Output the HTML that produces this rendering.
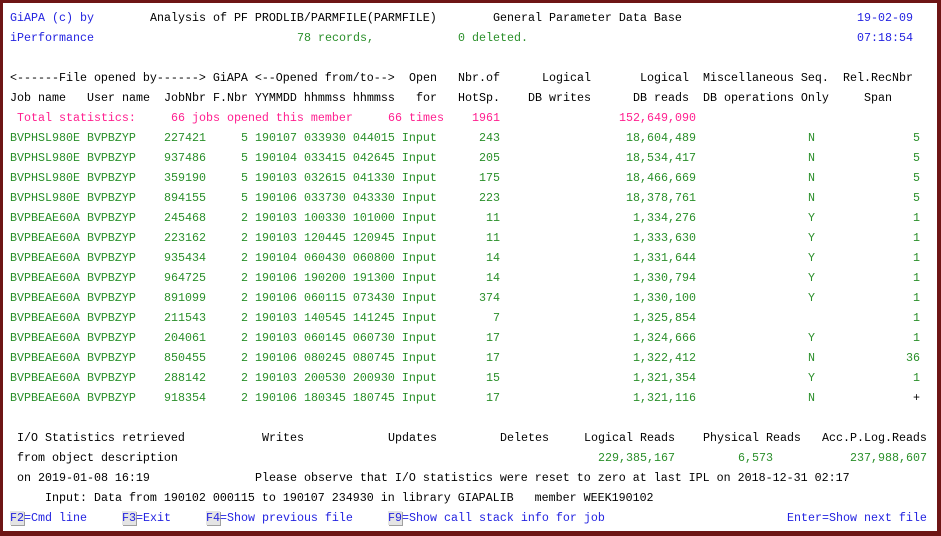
<!DOCTYPE html>
<html><head><meta charset="utf-8">
<style>
html,body{margin:0;padding:0}
body{width:941px;height:536px;background:#6e1515;position:relative;overflow:hidden}
#s{position:absolute;left:3px;top:3px;width:934px;height:528px;background:#fff}
#w{position:absolute;left:0;top:0;width:941px;height:536px;font-family:"Liberation Mono",monospace;font-size:11.67px;color:#000}
.l{position:absolute;left:0;width:941px;height:20px;line-height:20px}
.l span{position:absolute;white-space:pre}
.b{color:#2323e0}.g{color:#2a8f2a}.p{color:#ff1f8f}
.k{background:#e4e4e4;box-shadow:1px 1px 0 #a0a0a0}
</style></head><body>
<div id="s"></div>
<div id="w">
<div class="l" style="top:8px"><span class="b" style="left:10px">GiAPA (c) by</span><span style="left:150px">Analysis of PF PRODLIB/PARMFILE(PARMFILE)</span><span style="left:493px">General Parameter Data Base</span><span class="b" style="left:857px">19-02-09</span></div>
<div class="l" style="top:28px"><span class="b" style="left:10px">iPerformance</span><span class="g" style="left:297px">78 records,</span><span class="g" style="left:458px">0 deleted.</span><span class="b" style="left:857px">07:18:54</span></div>
<div class="l" style="top:68px"><span style="left:10px">&lt;------File opened by------&gt; GiAPA &lt;--Opened from/to--&gt;</span><span style="left:409px">Open</span><span style="left:458px">Nbr.of</span><span style="left:542px">Logical</span><span style="left:640px">Logical</span><span style="left:703px">Miscellaneous Seq.</span><span style="left:843px">Rel.RecNbr</span></div>
<div class="l" style="top:88px"><span style="left:10px">Job name</span><span style="left:87px">User name</span><span style="left:164px">JobNbr F.Nbr YYMMDD hhmmss hhmmss</span><span style="left:416px">for</span><span style="left:458px">HotSp.</span><span style="left:528px">DB writes</span><span style="left:633px">DB reads</span><span style="left:703px">DB operations Only</span><span style="left:864px">Span</span></div>
<div class="l p" style="top:108px"><span style="left:17px">Total statistics:</span><span style="left:171px">66 jobs opened this member</span><span style="left:388px">66 times</span><span style="right:441px">1961</span><span style="right:245px">152,649,090</span></div>

<div class="l g" style="top:128px"><span style="left:10px">BVPHSL980E BVPBZYP</span><span style="left:164px">227421</span><span style="left:241px">5 190107 033930 044015 Input</span><span style="right:441px">243</span><span style="right:245px">18,604,489</span><span style="left:808px">N</span><span style="right:21px">5</span></div>
<div class="l g" style="top:148px"><span style="left:10px">BVPHSL980E BVPBZYP</span><span style="left:164px">937486</span><span style="left:241px">5 190104 033415 042645 Input</span><span style="right:441px">205</span><span style="right:245px">18,534,417</span><span style="left:808px">N</span><span style="right:21px">5</span></div>
<div class="l g" style="top:168px"><span style="left:10px">BVPHSL980E BVPBZYP</span><span style="left:164px">359190</span><span style="left:241px">5 190103 032615 041330 Input</span><span style="right:441px">175</span><span style="right:245px">18,466,669</span><span style="left:808px">N</span><span style="right:21px">5</span></div>
<div class="l g" style="top:188px"><span style="left:10px">BVPHSL980E BVPBZYP</span><span style="left:164px">894155</span><span style="left:241px">5 190106 033730 043330 Input</span><span style="right:441px">223</span><span style="right:245px">18,378,761</span><span style="left:808px">N</span><span style="right:21px">5</span></div>
<div class="l g" style="top:208px"><span style="left:10px">BVPBEAE60A BVPBZYP</span><span style="left:164px">245468</span><span style="left:241px">2 190103 100330 101000 Input</span><span style="right:441px">11</span><span style="right:245px">1,334,276</span><span style="left:808px">Y</span><span style="right:21px">1</span></div>
<div class="l g" style="top:228px"><span style="left:10px">BVPBEAE60A BVPBZYP</span><span style="left:164px">223162</span><span style="left:241px">2 190103 120445 120945 Input</span><span style="right:441px">11</span><span style="right:245px">1,333,630</span><span style="left:808px">Y</span><span style="right:21px">1</span></div>
<div class="l g" style="top:248px"><span style="left:10px">BVPBEAE60A BVPBZYP</span><span style="left:164px">935434</span><span style="left:241px">2 190104 060430 060800 Input</span><span style="right:441px">14</span><span style="right:245px">1,331,644</span><span style="left:808px">Y</span><span style="right:21px">1</span></div>
<div class="l g" style="top:268px"><span style="left:10px">BVPBEAE60A BVPBZYP</span><span style="left:164px">964725</span><span style="left:241px">2 190106 190200 191300 Input</span><span style="right:441px">14</span><span style="right:245px">1,330,794</span><span style="left:808px">Y</span><span style="right:21px">1</span></div>
<div class="l g" style="top:288px"><span style="left:10px">BVPBEAE60A BVPBZYP</span><span style="left:164px">891099</span><span style="left:241px">2 190106 060115 073430 Input</span><span style="right:441px">374</span><span style="right:245px">1,330,100</span><span style="left:808px">Y</span><span style="right:21px">1</span></div>
<div class="l g" style="top:308px"><span style="left:10px">BVPBEAE60A BVPBZYP</span><span style="left:164px">211543</span><span style="left:241px">2 190103 140545 141245 Input</span><span style="right:441px">7</span><span style="right:245px">1,325,854</span><span style="right:21px">1</span></div>
<div class="l g" style="top:328px"><span style="left:10px">BVPBEAE60A BVPBZYP</span><span style="left:164px">204061</span><span style="left:241px">2 190103 060145 060730 Input</span><span style="right:441px">17</span><span style="right:245px">1,324,666</span><span style="left:808px">Y</span><span style="right:21px">1</span></div>
<div class="l g" style="top:348px"><span style="left:10px">BVPBEAE60A BVPBZYP</span><span style="left:164px">850455</span><span style="left:241px">2 190106 080245 080745 Input</span><span style="right:441px">17</span><span style="right:245px">1,322,412</span><span style="left:808px">N</span><span style="right:21px">36</span></div>
<div class="l g" style="top:368px"><span style="left:10px">BVPBEAE60A BVPBZYP</span><span style="left:164px">288142</span><span style="left:241px">2 190103 200530 200930 Input</span><span style="right:441px">15</span><span style="right:245px">1,321,354</span><span style="left:808px">Y</span><span style="right:21px">1</span></div>
<div class="l g" style="top:388px"><span style="left:10px">BVPBEAE60A BVPBZYP</span><span style="left:164px">918354</span><span style="left:241px">2 190106 180345 180745 Input</span><span style="right:441px">17</span><span style="right:245px">1,321,116</span><span style="left:808px">N</span><span style="right:21px;color:#000">+</span></div>

<div class="l" style="top:428px"><span style="left:17px">I/O Statistics retrieved</span><span style="left:262px">Writes</span><span style="left:388px">Updates</span><span style="left:500px">Deletes</span><span style="left:584px">Logical Reads</span><span style="left:703px">Physical Reads</span><span style="left:822px">Acc.P.Log.Reads</span></div>
<div class="l" style="top:448px"><span style="left:17px">from object description</span><span class="g" style="right:266px">229,385,167</span><span class="g" style="right:168px">6,573</span><span class="g" style="right:14px">237,988,607</span></div>
<div class="l" style="top:468px"><span style="left:17px">on 2019-01-08 16:19</span><span style="left:255px">Please observe that I/O statistics were reset to zero at last IPL on 2018-12-31 02:17</span></div>
<div class="l" style="top:488px"><span style="left:45px">Input: Data from 190102 000115 to 190107 234930 in library GIAPALIB   member WEEK190102</span></div>
<div class="l b" style="top:508px"><span style="left:10px"><span class="k" style="position:static">F2</span>=Cmd line</span><span style="left:122px"><span class="k" style="position:static">F3</span>=Exit</span><span style="left:206px"><span class="k" style="position:static">F4</span>=Show previous file</span><span style="left:388px"><span class="k" style="position:static">F9</span>=Show call stack info for job</span><span style="left:787px">Enter=Show next file</span></div>
</div>
</body></html>
